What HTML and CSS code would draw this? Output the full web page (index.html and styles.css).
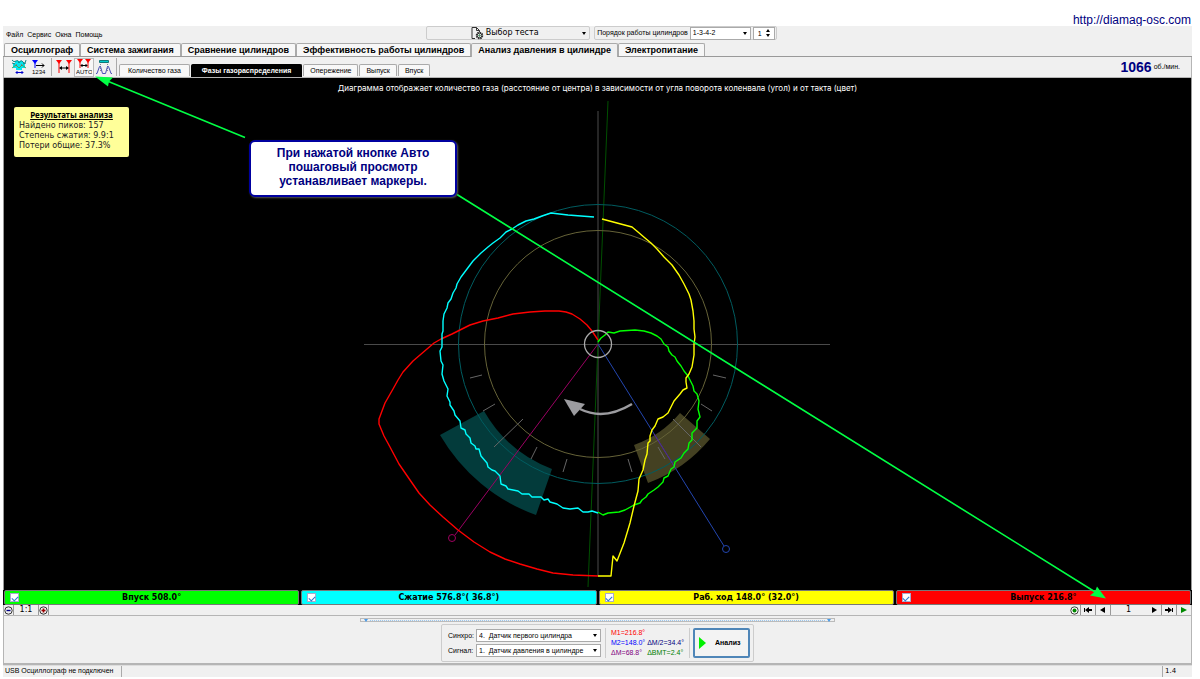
FILE: index.html
```html
<!DOCTYPE html>
<html lang="ru">
<head>
<meta charset="utf-8">
<title>Анализ давления в цилиндре</title>
<meta name="viewport" content="width=device-width, initial-scale=1">
<link rel="stylesheet" href="styles.css">
</head>
<body>
<header class="site"><a href="http://diamag-osc.com">http://diamag-osc.com</a></header>
<main class="window">
  <div class="menubar">
    <nav class="menu">
      <button type="button">Файл</button><button type="button">Сервис</button><button type="button">Окна</button><button type="button">Помощь</button>
    </nav>
    <div class="top-tools">
      <button type="button" class="test-picker">
        <span class="test-name">
          <svg width="13" height="13" viewBox="0 0 13 13" fill="none" stroke="#333"><path d="M4 11.500H1V.5h4.500l3 3V5M5.500.5v3h3" /><circle cx="8.500" cy="8.500" r="3" stroke-width="1.500" stroke-dasharray="1.600 .7"/><circle cx="8.500" cy="8.500" r="2.300"/><circle cx="8.500" cy="8.500" r=".7" stroke="#163"/></svg>
          Выбор теста
        </span>
        <i class="caret"></i>
      </button>
      <div class="order">
        <label for="order">Порядок работы цилиндров</label>
        <span class="combo combo-order"><select id="order"><option>1-3-4-2</option></select><i class="caret"></i></span>
        <span class="spin"><input type="text" value="1" aria-label="Цилиндр">
          <span class="spin-buttons"><button type="button" aria-label="Больше"><i class="up"></i></button><button type="button" aria-label="Меньше"><i class="caret"></i></button></span>
        </span>
      </div>
    </div>
  </div>

  <div class="main-tabs" role="tablist">
    <button type="button" role="tab">Осциллограф</button>
    <button type="button" role="tab">Система зажигания</button>
    <button type="button" role="tab">Сравнение цилиндров</button>
    <button type="button" role="tab">Эффективность работы цилиндров</button>
    <button type="button" role="tab" class="active" aria-selected="true">Анализ давления в цилиндре</button>
    <button type="button" role="tab">Электропитание</button>
  </div>

  <div class="toolbar">
    <button type="button" class="tool" aria-label="Сжать сигнал">
      <svg width="16" height="16" viewBox="0 0 16 16" fill="none"><path d="M4 2h8v2h2v5h-3v2H5V9H2V4h2z" fill="#00e5ee"/><path d="M1 1q2 3 4 1t3 2q2-4 4-1t3-2M1 4l3 1M12 5l3-1" stroke="#188" /><path d="M1 9l4-3 3 3 3-3 4 3" stroke="#4ba05a"/><path d="M5 6h1M10 6h1" stroke="#d33"/><path d="M5 13.500h7M6.500 12L5 13.500 6.500 15M10.500 12l1.500 1.500-1.500 1.500" stroke="#00c"/></svg>
    </button>
    <button type="button" class="tool" aria-label="Номера">
      <svg width="16" height="16" viewBox="0 0 16 16"><path d="M1 1h6L4 5z" fill="#00f"/><path d="M4 4v5" stroke="#00f"/><path d="M5 6.500h8M11 4.500l2 2-2 2" stroke="#000" fill="none"/><text x="1" y="15" class="icon-text">1234</text></svg>
    </button>
    <span class="divider"></span>
    <button type="button" class="tool" aria-label="Маркеры">
      <svg width="16" height="16" viewBox="0 0 16 16"><path d="M0 1h6L3 5zM10 1h6l-3 4z" fill="#f00"/><path d="M3 4v10M13 4v10" stroke="#f00"/><path d="M4 9h8" stroke="#000"/><path d="M3 9l3-2v4zM13 9l-3-2v4z"/></svg>
    </button>
    <button type="button" class="tool pressed" aria-label="Авто" aria-pressed="true">
      <svg width="16" height="16" viewBox="0 0 16 16"><path d="M1 0h6L4 4zM9 0h6l-3 4z" fill="#f00"/><path d="M4 3v6M12 3v6" stroke="#f00"/><path d="M5 6.500h6M6.500 5L5 6.500 6.500 8M9.500 5L11 6.500 9.500 8" stroke="#000" fill="none"/><text x="0" y="15" class="icon-text">AUTO</text></svg>
    </button>
    <button type="button" class="tool" aria-label="Кривая">
      <svg width="16" height="16" viewBox="0 0 16 16" fill="none"><path d="M3.500 1.500h9v2h-9z" fill="#0cc" stroke="#177"/><path d="M4.500 5v8M11.500 5v8" stroke="#888" stroke-dasharray="1 1"/><path d="M0 14.500h1L3.500 7.500h1L6.500 14.500h3L11.500 7.500h1L15 14.500h1" stroke="#4a50b8"/></svg>
    </button>
    <span class="divider"></span>
    <div class="sub-tabs" role="tablist">
      <button type="button" role="tab" class="first">Количество газа</button>
      <button type="button" role="tab" class="active" aria-selected="true">Фазы газораспределения</button>
      <button type="button" role="tab">Опережение</button>
      <button type="button" role="tab">Выпуск</button>
      <button type="button" role="tab">Впуск</button>
    </div>
    <p class="rpm"><strong>1066</strong><span>об./мин.</span></p>
  </div>

  <section class="chart">
    <svg class="plot" viewBox="4 78 1187 512" fill="none" role="img" aria-label="Круговая диаграмма фаз">
      <path d="M364 344.500H830M598 111V576" stroke="#4a4a4a"/>
      <path d="M608 101L588 587" stroke="#005000"/>
      <path d="M484 411L440 435A182 182 0 0 0 536 515L552 469A132 132 0 0 1 484 411Z" fill="#033b3b"/>
      <path d="M680 413L710 439A147 147 0 0 1 648 483L634 445A107 107 0 0 0 680 413Z" fill="#444122"/>
      <circle cx="598" cy="344" r="139.500" stroke="#005c60"/>
      <circle cx="598" cy="344" r="113.500" stroke="#666338"/>
      <path d="M470 378L482 375M483 411L495 404M494 447L523 419M531 459L537 447M563 472L567 459M713 375L726 378M701 404L712 411M673 419L701 447M658 447L665 459M628 459L632 472" stroke="#666"/>
      <path d="M598 344L455 535" stroke="#9b0062"/><circle cx="452" cy="538" r="3.500" stroke="#a00060"/>
      <path d="M598 344L724 546" stroke="#2346b0"/><circle cx="726" cy="549" r="3.500" stroke="#2346b0"/>
      <path d="M654 434L674 466" stroke="#5a2585"/>
      <g stroke-width="1.400" stroke-linejoin="round">
        <path d="M598 340L592 331 587 325 580 319 572 314 566 312 559 311H545L530 312 513 314 498 318 483 321 470 325 452 334 441 339 434 343 427 349 420 355 413 361 403 372 398 380 393 389 389 396 385 403 382 411 379 419V424L384 436 390 447 399 464 410 480 419 493 430 505 443 517 458 530 474 542 490 552 505 559 520 564 537 569 553 573 573 575 598 576" stroke="#f00"/>
        <path d="M594 217L568 215 551 213 542 216 534 219 526 221 518 225 512 229 506 232 500 238 493 243 488 247 481 253 473 261 467 269 461 277 457 284 456 288 453 293 451 299 448 303 447 308 444 314 443 321 443 331 442 334 442 347 440 351 441 361 443 365 442 374 444 381 448 389 447 396 450 402 450 405 454 411 455 415 460 421 461 428 465 430 466 434 470 438 471 443 475 446 476 449 479 449 481 456 487 463 488 467 492 470 495 471 500 476 501 484 506 486 508 489 518 491 522 494 529 494 532 497 541 497 544 500 548 499 550 502 557 504 563 508 570 509 578 508 583 512 588 512 592 511 598 513" stroke="#0ff"/>
        <path d="M598 342L601 338 605 335 608 332 614 333 620 331 635 330 644 331 651 333 657 336 661 339 664 344 668 347 669 351 672 355 675 357 677 361 681 366 684 371 688 376 690 380 693 386 694 391 697 394 699 401 698 409 700 417 697 421 697 428 692 433 692 440 689 443 688 449 684 453 681 458 675 462 674 467 671 469 668 476 664 478 663 482 658 487 654 490 651 492 648 494 646 497 642 500 640 503 634 505 625 510 619 512 608 513 603 515 598 512" stroke="#0f0"/>
        <path d="M602 219L617 223 632 227 638 232 645 238 651 243 657 249 664 257 672 265 679 275 684 284 689 294 691 300 693 311 694 321 694 329 695 337 694 344 694 355 692 367 689 374 686 378 686 382 687 388 683 390 680 394 674 401 668 413 663 417 658 419 655 426 652 430 650 436 650 441 648 443 647 454 645 460 643 470 639 479 638 491 634 506 630 523 624 543 617 561 613 556 611 576H598" stroke="#ff0"/>
      </g>
      <circle cx="598" cy="344" r="13.500" stroke="#aaa" stroke-width="1.300"/>
      <path d="M580 409Q604 421 632 404" stroke="#9c9ca0" stroke-width="2.500"/><path d="M564 399L585 404 574 416Z" fill="#9c9ca0"/>
    </svg>
    <p class="caption">Диаграмма отображает количество газа (расстояние от центра) в зависимости от угла поворота коленвала (угол) и от такта (цвет)</p>
    <aside class="results">
      <h2>Результаты анализа</h2>
      <p>Найдено пиков: 157</p>
      <p>Степень сжатия: 9.9:1</p>
      <p>Потери общие: 37.3%</p>
    </aside>
  </section>

  <div class="phases">
    <label class="phase intake"><input type="checkbox" checked><span>Впуск 508.0°</span></label>
    <label class="phase compression"><input type="checkbox" checked><span>Сжатие 576.8°( 36.8°)</span></label>
    <label class="phase power"><input type="checkbox" checked><span>Раб. ход 148.0° (32.0°)</span></label>
    <label class="phase exhaust"><input type="checkbox" checked><span>Выпуск 216.8°</span></label>
  </div>

  <div class="strip">
    <div class="zoom">
      <button type="button" aria-label="Уменьшить"><svg width="9" height="9" viewBox="0 0 9 9" fill="none"><circle cx="4.500" cy="4.500" r="3.700" stroke="#333"/><path d="M2.500 4.500h4" stroke="#008" stroke-width="1.400"/></svg></button>
      <button type="button" class="ratio">1:1</button>
      <button type="button" aria-label="Увеличить"><svg width="9" height="9" viewBox="0 0 9 9" fill="none"><circle cx="4.500" cy="4.500" r="3.700" stroke="#333"/><path d="M2.500 4.500h4M4.500 2.500v4" stroke="#900" stroke-width="1.600"/></svg></button>
    </div>
    <div class="player">
      <button type="button" aria-label="Запись"><svg width="9" height="9" viewBox="0 0 9 9"><circle cx="4.500" cy="4.500" r="3.700" fill="#fff" stroke="#444"/><circle cx="4.500" cy="4.500" r="2" fill="#080"/></svg></button>
      <button type="button" aria-label="В начало"><svg width="8" height="6" viewBox="0 0 8 6"><path d="M0 1h1v4H0zM5 0v6L1 3zM5 2h3v2H5z"/></svg></button>
      <button type="button" aria-label="Назад"><svg width="6" height="6" viewBox="0 0 6 6"><path d="M5 0v6L0 3z"/></svg></button>
      <output>1</output>
      <button type="button" aria-label="Вперёд"><svg width="6" height="6" viewBox="0 0 6 6"><path d="M1 0v6l5-3z"/></svg></button>
      <button type="button" aria-label="В конец"><svg width="8" height="6" viewBox="0 0 8 6"><path d="M7 1h1v4H7zM3 0v6l4-3zM0 2h3v2H0z"/></svg></button>
      <button type="button" aria-label="Пуск"><svg width="6" height="6" viewBox="0 0 6 6"><path d="M0 0v6l6-3z" fill="#080"/></svg></button>
    </div>
  </div>

  <section class="bottom">
    <div class="splitter"><i class="blue-caret"></i><span></span><i class="blue-caret"></i></div>
    <form class="settings">
      <div class="fields">
        <label for="sync">Синхро:</label>
        <span class="combo"><select id="sync"><option>4.&nbsp; Датчик первого цилиндра</option></select><i class="caret"></i></span>
        <label for="signal">Сигнал:</label>
        <span class="combo"><select id="signal"><option>1.&nbsp; Датчик давления в цилиндре</option></select><i class="caret"></i></span>
      </div>
      <div class="markers">
        <span class="m1">M1=216.8°</span><span></span>
        <span class="m2">M2=148.0°</span><span class="half">ΔM/2=34.4°</span>
        <span class="dm">ΔM=68.8°</span><span class="bmt">ΔВМТ=2.4°</span>
      </div>
      <button type="button" class="analyze"><svg width="7" height="12" viewBox="0 0 7 12"><path d="M0 0v12l7-6z" fill="#00f000"/></svg><span>Анализ</span></button>
    </form>
  </section>
  <footer class="status"><span class="device">USB Осциллограф не подключен</span><span class="version">1.4</span></footer>
</main>

<svg class="pointers" viewBox="0 0 1200 679" fill="none" aria-hidden="true">
  <path d="M245 137L106 80M457 194L1096 592" stroke="#0f4" stroke-width="1.600"/>
  <path d="M95 76L113 77 109 81 108 86ZM1106 598L1090 595 1095 591 1097 586Z" fill="#0f4"/>
</svg>
<p class="callout">При нажатой кнопке Авто пошаговый просмотр устанавливает маркеры.</p>
</body>
</html>
```

FILE: styles.css
```css
* { box-sizing: border-box; }
body {
  position: relative;
  margin: 0;
  min-height: 100vh;
  display: flex;
  flex-direction: column;
  background: #fff;
  color: #000;
  font: 7px/10px "Liberation Sans", Arial, sans-serif;
}
p, h2 { margin: 0; }
svg { display: block; flex: none; }
button, input, select { font: inherit; color: inherit; margin: 0; padding: 0; border: 0; background: none; border-radius: 0; }

.site { height: 26px; padding: 13px 9px 0 0; text-align: right; font-size: 12px; line-height: 14px; }
.site a { color: #000080; text-decoration: none; }

.window { flex: 1; display: flex; flex-direction: column; margin: 0 8px 3px 3px; background: #f0f0f0; }

.caret, .up, .blue-caret { display: block; width: 0; height: 0; border: 2px solid transparent; border-top: 3px solid #000; border-bottom: 0; }
.up { border-top: 0; border-bottom: 3px solid #000; }
.blue-caret { border-top-color: #4a9be8; }

.menubar { height: 17px; display: grid; grid-template-columns: 1fr auto 1fr; }
.menu { display: flex; gap: 4px; padding: 4px 0 0 3px; align-items: flex-start; }
.top-tools { display: flex; gap: 4px; padding-left: 8px; height: 14px; }
.test-picker, .order { border: 1px solid #ccc; border-radius: 2px; }
.test-picker { width: 164px; display: flex; align-items: center; justify-content: center; padding-right: 3px; font: 8px/12px "DejaVu Sans", sans-serif; }
.test-name { flex: 1; display: flex; gap: 2px; align-items: center; justify-content: center; }
.order { display: flex; align-items: center; gap: 2px; padding: 0 1px 0 2px; }
.combo { position: relative; display: block; height: 13px; border: 1px solid #aaa; background: #fff; }
.combo select { appearance: none; display: block; width: 100%; height: 11px; padding-left: 2px; }
.combo .caret { position: absolute; right: 3px; top: 4px; pointer-events: none; }
.combo-order { width: 61px; }
.spin { display: flex; align-items: center; width: 22px; height: 13px; border: 1px solid #aaa; background: #fff; }
.spin input { width: 12px; height: 11px; padding-left: 4px; }
.spin-buttons { display: grid; gap: 2px; }
.spin-buttons button { display: block; }

.main-tabs { display: flex; height: 14px; border-bottom: 1px solid #999; padding-left: 1px; align-items: flex-end; }
.main-tabs button { height: 13px; padding: 0 6px; border: 1px solid #aaa; border-bottom: 0; border-radius: 2px 2px 0 0; background: #f7f7f7; font-size: 9px; font-weight: bold; white-space: nowrap; }
.main-tabs .active { height: 14px; margin-bottom: -1px; padding-bottom: 2px; background: #f0f0f0; }

.toolbar { display: flex; align-items: center; height: 21px; padding-left: 5px; border: solid #b5b5b5; border-width: 0 1px 1px; }
.tool { width: 20px; height: 19px; display: grid; place-items: center; }
.tool.pressed { border: 1px solid #bbb; background: #f8f8f8; }
.icon-text { font: 6px "Liberation Sans", sans-serif; }
.divider { width: 1px; height: 18px; background: #aaa; margin: 0 2px; }
.sub-tabs { display: flex; gap: 1px; align-self: flex-end; }
.sub-tabs button { height: 12px; padding: 0 6px; border: 1px solid #aaa; border-bottom: 0; border-radius: 2px 2px 0 0; background: #f8f8f8; white-space: nowrap; }
.sub-tabs .first { padding: 0 8px; }
.sub-tabs .active { background: #000; color: #fff; font-weight: bold; border-color: #000; height: 13px; padding: 0 10px; }
.rpm { margin-left: auto; padding-right: 11px; display: flex; align-items: center; gap: 2px; }
.rpm strong { font-size: 14px; line-height: 16px; color: #000080; }

.chart { flex: 1; display: grid; min-height: 0; background: #000; border: solid #999; border-width: 0 1px; }
.chart > * { grid-area: 1 / 1; }
.plot { width: 100%; height: 100%; }
.caption { justify-self: center; padding-top: 5px; color: #fff; font: 8px/11px Inter, sans-serif; }
.results { justify-self: start; align-self: start; width: 115px; min-height: 50px; margin: 29px 0 0 10px; padding: 2px 5px 4px; border-radius: 2px; background: #ffff99; color: #222; font: 8px/10px "DejaVu Sans", sans-serif; white-space: nowrap; }
.results h2 { font: bold 8px/12px "Noto Sans", sans-serif; text-align: center; text-decoration: underline; color: #000; }

.phases { display: grid; grid-template-columns: repeat(4, 1fr); gap: 2px; height: 15px; padding: 0 1px; background: #000; }
.phase { display: grid; grid-template-columns: 9px 1fr 9px; align-items: center; padding: 0 5px; border: 1px solid #777; border-radius: 2px; text-align: center; font: bold 8px/12px "DejaVu Sans", sans-serif; }
.phase input { appearance: none; width: 9px; height: 9px; border: 1px solid #aac; background: #fff; display: grid; place-items: center; }
.phase input:checked::before { content: ""; width: 5px; height: 3px; border: solid #2878d0; border-width: 0 0 1px 1px; transform: rotate(-45deg); }
.intake { background: #0f0; }
.compression { background: #0ff; }
.power { background: #ff0; }
.exhaust { background: #f00; }

.strip { display: flex; justify-content: space-between; height: 11px; border: solid #b5b5b5; border-width: 0 1px 1px; }
.zoom, .player { display: flex; font: 8px/10px "DejaVu Sans", sans-serif; }
.zoom button { width: 10px; display: grid; place-items: center; border-right: 1px solid #999; }
.zoom .ratio { width: 25px; }
.player button { width: 15px; display: grid; place-items: center; border-left: 1px solid #999; }
.player button:first-child { width: 11px; border: 0; }
.player output { width: 36px; text-align: center; border-left: 1px solid #999; }
.player output + button { border-left: 0; }

.bottom { height: 49px; display: flex; flex-direction: column; align-items: center; gap: 2px; padding-top: 2px; border: solid #b5b5b5; border-width: 0 1px 2px; }
.splitter { display: flex; align-items: center; gap: 2px; width: 40%; height: 4px; padding: 0 3px; border: 1px solid #bbb; }
.splitter span { flex: 1; border-top: 1px dotted #9cc8f0; }
.settings { display: flex; align-items: center; height: 38px; padding: 0 3px 0 6px; border: 1px solid #ccc; border-radius: 2px; }
.fields { display: grid; grid-template-columns: auto 125px; gap: 2px 2px; align-items: center; padding-right: 4px; }
.markers { display: grid; grid-template-columns: auto auto; column-gap: 2px; padding: 0 5px; border: solid #ccc; border-width: 0 1px; }
.m1 { color: #f00; }
.m2 { color: #00f; }
.half { color: #000080; }
.dm { color: #800080; }
.bmt { color: #008000; }
.analyze { display: flex; align-items: center; width: 57px; height: 30px; margin-left: 3px; padding-left: 4px; gap: 9px; border: 2px solid #4f86b8; border-radius: 2px; background: #f3f3f3; font-weight: bold; }

.status { display: flex; height: 12px; border-top: 1px solid #ddd; }
.device { width: 119px; padding-left: 2px; border-right: 1px solid #aaa; white-space: nowrap; }
.version { margin-left: auto; width: 30px; padding-left: 2px; border-left: 1px solid #aaa; font: 7px/10px "DejaVu Sans", sans-serif; }

.pointers { position: absolute; inset: 0; width: 100%; height: 100%; pointer-events: none; }
.callout { position: absolute; left: 249px; top: 140px; width: 208px; min-height: 57px; padding: 4px 24px; border: 2px solid #0000a0; border-radius: 6px; background: #fff; box-shadow: 1px 1px 2px #555; color: #000080; text-align: center; font-size: 12px; line-height: 14px; font-weight: bold; }
```
